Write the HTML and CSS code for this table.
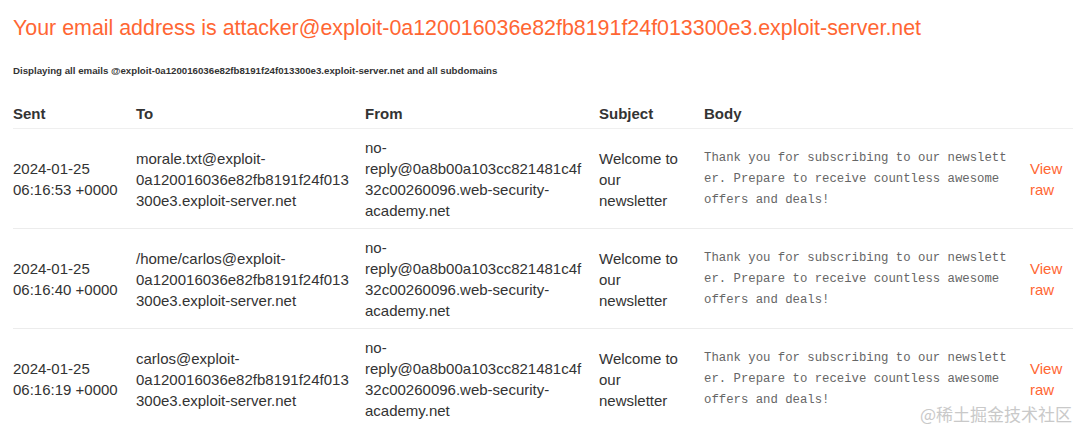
FILE: index.html
```html
<!DOCTYPE html>
<html>
<head>
<meta charset="utf-8">
<link rel="stylesheet" href="styles.css">
</head>
<body>
<div class="page">
  <h2 class="title">Your email address is attacker@exploit-0a120016036e82fb8191f24f013300e3.exploit-server.net</h2>
  <h6 class="sub">Displaying all emails @exploit-0a120016036e82fb8191f24f013300e3.exploit-server.net and all subdomains</h6>
  <table class="emails">
    <colgroup>
      <col class="c-sent"><col class="c-to"><col class="c-from"><col class="c-subj"><col class="c-body"><col class="c-raw">
    </colgroup>
    <thead>
      <tr><th>Sent</th><th>To</th><th>From</th><th>Subject</th><th>Body</th><th></th></tr>
    </thead>
    <tbody>
      <tr>
        <td>2024-01-25 06:16:53 +0000</td>
        <td class="wrap">morale.txt@exploit-0a120016036e82fb8191f24f013300e3.exploit-server.net</td>
        <td class="wrap">no-reply@0a8b00a103cc821481c4f32c00260096.web-security-academy.net</td>
        <td>Welcome to our newsletter</td>
        <td class="body">Thank you for subscribing to our newsletter. Prepare to receive countless awesome offers and deals!</td>
        <td><a class="raw" href="#">View raw</a></td>
      </tr>
      <tr>
        <td>2024-01-25 06:16:40 +0000</td>
        <td class="wrap">/home/carlos@exploit-0a120016036e82fb8191f24f013300e3.exploit-server.net</td>
        <td class="wrap">no-reply@0a8b00a103cc821481c4f32c00260096.web-security-academy.net</td>
        <td>Welcome to our newsletter</td>
        <td class="body">Thank you for subscribing to our newsletter. Prepare to receive countless awesome offers and deals!</td>
        <td><a class="raw" href="#">View raw</a></td>
      </tr>
      <tr>
        <td>2024-01-25 06:16:19 +0000</td>
        <td class="wrap">carlos@exploit-0a120016036e82fb8191f24f013300e3.exploit-server.net</td>
        <td class="wrap">no-reply@0a8b00a103cc821481c4f32c00260096.web-security-academy.net</td>
        <td>Welcome to our newsletter</td>
        <td class="body">Thank you for subscribing to our newsletter. Prepare to receive countless awesome offers and deals!</td>
        <td><a class="raw" href="#">View raw</a></td>
      </tr>
    </tbody>
  </table>
</div>
<div class="watermark">@稀土掘金技术社区</div>
</body>
</html>
```

FILE: styles.css
```css
html, body {
  margin: 0;
  padding: 0;
  background: #fff;
}
body {
  font-family: "Liberation Sans", Arial, sans-serif;
  color: #333;
  overflow: hidden;
}
.page {
  padding: 0 7px 0 13px;
}
.title {
  margin: 0;
  padding-top: 15px;
  font-size: 21.4px;
  font-weight: normal;
  line-height: 26px;
  color: #ff6633;
}
.sub {
  margin: 24px 0 0 0;
  font-size: 9.7px;
  font-weight: bold;
  line-height: 12px;
  color: #333;
}
.emails {
  margin-top: 18px;
  width: 100%;
  border-collapse: collapse;
  table-layout: fixed;
  font-size: 15px;
  line-height: 21px;
}
.c-sent { width: 123px; }
.c-to { width: 229px; }
.c-from { width: 234px; }
.c-subj { width: 105px; }
.c-body { width: 326px; }
.c-raw { width: auto; }
.emails th {
  text-align: left;
  font-weight: bold;
  padding: 8px 14px 4px 0;
  border-bottom: 1px solid #efefef;
  vertical-align: middle;
}
.emails td {
  padding: 8px 14px 7px 0;
  border-bottom: 1px solid #ececec;
  vertical-align: middle;
}
.emails td:last-child, .emails th:last-child {
  padding-right: 0;
}
.emails tbody tr:last-child td {
  border-bottom: none;
}
.wrap {
  overflow-wrap: break-word;
}
.emails td.body {
  font-family: "Liberation Mono", "Courier New", monospace;
  font-size: 12.3px;
  color: #666;
  word-break: break-all;
  padding-right: 18px;
}
.raw {
  color: #ff6633;
  text-decoration: none;
}
.watermark {
  position: absolute;
  right: 8px;
  bottom: 5px;
  font-family: "Noto Sans CJK SC", sans-serif;
  font-size: 17px;
  line-height: 20px;
  color: #c9c9c9;
}
```
